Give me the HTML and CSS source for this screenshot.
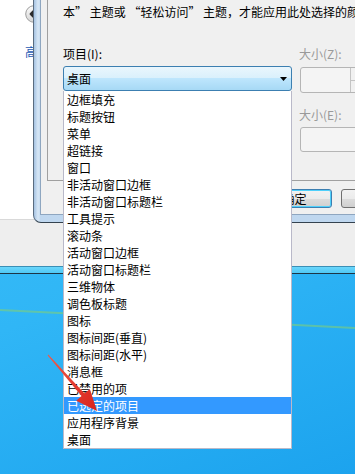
FILE: index.html
```html
<!DOCTYPE html>
<html lang="zh-CN">
<head>
<meta charset="utf-8">
<title>窗口颜色和外观</title>
<link rel="stylesheet" href="styles.css">
</head>
<body>
<div class="screen">
  <div class="glint"></div>

  <div class="host-window">
    <div class="host-client">
      <div class="nav-pane">
        <svg class="back-btn" viewBox="0 0 18 18" width="18" height="18">
          <defs>
            <linearGradient id="bb" x1="0" y1="0" x2="0" y2="1">
              <stop offset="0" stop-color="#fdfdfd"/>
              <stop offset="1" stop-color="#d4d4d4"/>
            </linearGradient>
          </defs>
          <circle cx="9" cy="9" r="8.3" fill="url(#bb)" stroke="#9c9c9c" stroke-width="1"/>
          <path d="M5.5 9 L8.5 6 M5.5 9 L8.5 12 M5.5 9 H13" stroke="#2b2b2b" stroke-width="1.8" fill="none" stroke-linecap="round"/>
        </svg>
        <span class="nav-link">高级</span>
      </div>
    </div>
    <div class="host-frame"></div>
  </div>

  <div class="dialog">
    <div class="client">
      <div class="panel">
        <p class="note">本” 主题或 “轻松访问” 主题，才能应用此处选择的颜色和大小。</p>
        <div class="fields">
          <div class="col-item">
            <div class="label">项目(I):</div>
            <div class="combo">
              <span class="combo-text">桌面</span>
              <svg class="combo-arrow" viewBox="0 0 7 4" width="7" height="4"><path d="M0 0 H7 L3.5 4 Z" fill="#000"/></svg>
              <ul class="dropdown">
                <li>边框填充</li>
                <li>标题按钮</li>
                <li>菜单</li>
                <li>超链接</li>
                <li>窗口</li>
                <li>非活动窗口边框</li>
                <li>非活动窗口标题栏</li>
                <li>工具提示</li>
                <li>滚动条</li>
                <li>活动窗口边框</li>
                <li>活动窗口标题栏</li>
                <li>三维物体</li>
                <li>调色板标题</li>
                <li>图标</li>
                <li>图标间距(垂直)</li>
                <li>图标间距(水平)</li>
                <li>消息框</li>
                <li>已禁用的项</li>
                <li class="selected">已选定的项目</li>
                <li>应用程序背景</li>
                <li>桌面</li>
              </ul>
            </div>
          </div>
          <div class="col-size">
            <div class="label disabled">大小(Z):</div>
            <div class="spin">
              <div class="spin-text"></div>
              <div class="spin-btns"><span></span><span></span></div>
            </div>
            <div class="label disabled second">大小(E):</div>
            <div class="textbox"></div>
          </div>
        </div>
      </div>
      <div class="buttons">
        <button class="btn default">确定</button>
        <button class="btn">取消</button>
      </div>
    </div>
  </div>

  <svg class="pointer" viewBox="0 0 355 474" width="355" height="474">
    <defs>
      <linearGradient id="ar" x1="0" y1="0" x2="1" y2="1">
        <stop offset="0" stop-color="#f25a48"/>
        <stop offset="1" stop-color="#d8231c"/>
      </linearGradient>
    </defs>
    <polygon points="48.3,354.6 84.5,393.5 89.8,389 97,411 76.2,400.7 81.5,396.1 47.7,355.4" fill="url(#ar)"/>
  </svg>
</div>
</body>
</html>
```

FILE: styles.css
```css
* {
  box-sizing: border-box;
}

html,
body {
  margin: 0;
  padding: 0;
}

body {
  width: 355px;
  height: 474px;
  overflow: hidden;
  font-family: "Noto Sans CJK SC", "Noto Sans", sans-serif;
  font-size: 12px;
  color: #000;
}

.screen {
  position: relative;
  width: 355px;
  height: 474px;
  overflow: hidden;
  background: linear-gradient(160deg, #3fc2f7 0%, #30b6f6 55%, #1ca3ee 100%);
}

.glint {
  position: absolute;
  left: 0;
  top: 309px;
  width: 380px;
  height: 2px;
  background: rgba(135, 210, 110, 0.55);
  transform-origin: 0 0;
  transform: rotate(2.9deg);
}

/* background window */
.host-window {
  position: absolute;
  left: 0;
  top: 0;
  width: 355px;
  display: flex;
  flex-direction: column;
}

.host-client {
  height: 266px;
  background: #eeeeee;
}

.nav-pane {
  width: 40px;
  height: 220px;
  overflow: hidden;
  background: #ffffff;
  border-bottom: 1px solid #d9d9d9;
  padding: 5px 0 0 25px;
  display: flex;
  flex-direction: column;
  align-items: flex-start;
}

.back-btn {
  display: block;
  flex-shrink: 0;
}

.nav-link {
  margin-top: 22px;
  color: #1e5ab4;
  line-height: 14px;
  white-space: nowrap;
}

.host-frame {
  height: 8px;
  border-top: 1px solid #3a8fb6;
  border-bottom: 1px solid #1d3546;
  background: linear-gradient(#6ad6fb, #4fc8f5);
}

/* dialog */
.dialog {
  position: absolute;
  left: 33px;
  top: 0;
  width: 420px;
  height: 223px;
  border-left: 1px solid #5a6c80;
  border-bottom: 1px solid #34424f;
  border-bottom-left-radius: 8px;
  padding: 0 0 7px 6px;
  background-color: #bfd7ef;
  background-image: linear-gradient(to right, #a6c3e2, #d7e7f6 4px, #c6dcf1 6px);
  background-size: 6px 100%;
  background-repeat: no-repeat;
}

.client {
  height: 215px;
  background: #f0f0f0;
  border-left: 1px solid #8ea6c0;
  border-bottom: 1px solid #8ea6c0;
  padding-left: 6px;
}

.panel {
  height: 181px;
  border-left: 1px solid #a0a0a0;
  border-bottom: 1px solid #a0a0a0;
  padding: 4px 0 0 15px;
}

.note {
  margin: 0;
  font-size: 12px;
  line-height: 15px;
  white-space: nowrap;
}

.fields {
  display: flex;
  gap: 7px;
  padding-top: 27px;
}

.col-item {
  width: 229px;
  display: flex;
  flex-direction: column;
  gap: 5px;
}

.label {
  line-height: 15px;
  white-space: nowrap;
}

.label.disabled {
  color: #9a9a9a;
}

.combo {
  position: relative;
  height: 25px;
  display: flex;
  align-items: center;
  justify-content: space-between;
  padding: 0 4px 0 3px;
  border: 1px solid #3c7fb1;
  border-radius: 3px;
  background: linear-gradient(#eaf6fd 0%, #d9f0fc 50%, #bee6fd 50%, #a7d9f5 100%);
}

.combo-text {
  line-height: 15px;
}

.combo-arrow {
  display: block;
}

.dropdown {
  position: absolute;
  z-index: 5;
  left: -1px;
  top: calc(100% + 1px);
  width: 229px;
  margin: 0;
  padding: 0;
  list-style: none;
  background: #ffffff;
  border: 1px solid #b9b9c9;
  border-top: none;
}

.dropdown li {
  height: 17px;
  line-height: 17px;
  padding-left: 3px;
  white-space: nowrap;
}

.dropdown li.selected {
  background: #3399ff;
  color: #ffffff;
}

.col-size {
  display: flex;
  flex-direction: column;
  align-items: flex-start;
}

.spin {
  margin: 6px 0 0 1px;
  height: 26px;
  width: 80px;
  display: flex;
  border: 1px solid #b5b5b5;
  border-radius: 3px;
  background: #f4f4f4;
}

.spin-text {
  width: 49px;
}

.spin-btns {
  width: 18px;
  display: flex;
  flex-direction: column;
  border-left: 1px solid #c4c4c4;
}

.spin-btns span {
  flex: 1;
  background: #f1f1f1;
}

.spin-btns span:first-child {
  border-bottom: 1px solid #c4c4c4;
}

.label.second {
  margin-top: 14px;
}

.textbox {
  margin: 5px 0 0 1px;
  height: 25px;
  width: 80px;
  border: 1px solid #b5b5b5;
  border-radius: 3px;
  background: #f4f4f4;
}

.buttons {
  display: flex;
  gap: 9px;
  padding: 8px 0 0 210px;
}

.btn {
  width: 75px;
  height: 19px;
  padding: 0;
  font-family: inherit;
  font-size: 12px;
  line-height: 17px;
  color: #000;
  border: 1px solid #707070;
  border-radius: 3px;
  background: linear-gradient(#f2f2f2 0%, #ebebeb 50%, #dddddd 50%, #cfcfcf 100%);
}

.btn.default {
  border-color: #3c7fb1;
  box-shadow: inset 0 0 0 1px #4fd0fb;
}

.pointer {
  position: absolute;
  left: 0;
  top: 0;
  z-index: 20;
  pointer-events: none;
}
```
